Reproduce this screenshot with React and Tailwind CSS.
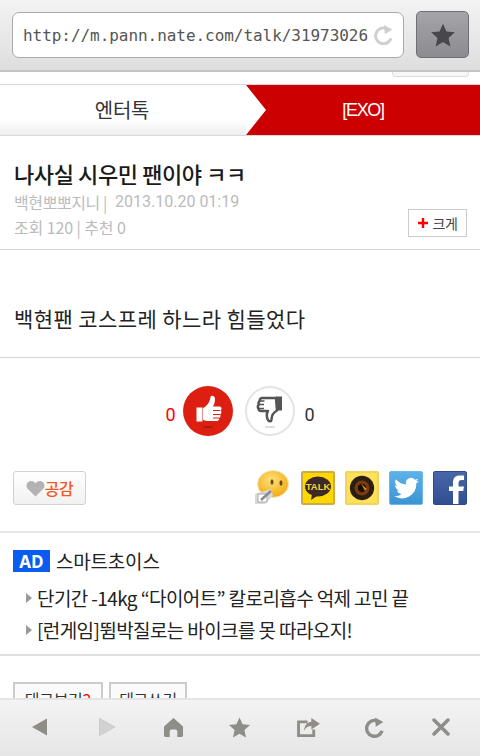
const KR = { fontFamily: '"Noto Sans CJK KR", "Noto Sans", sans-serif' };

function Star({ className }) {
  return (
    <svg viewBox="0 0 24 24" className={className} fill="currentColor">
      <path d="M12 1.500l3.200 7.200 7.800.8-5.900 5.200 1.700 7.800L12 18.400l-6.800 4.100 1.700-7.800L1 9.500l7.800-.8z" />
    </svg>
  );
}

function Refresh({ className, stroke = 4 }) {
  return (
    <svg viewBox="0 0 24 24" className={className} fill="none">
      <path d="M20.500 16a9.500 9.500 0 1 1-6-12" stroke="currentColor" strokeWidth={stroke} />
      <path d="M12 0l10 5.500-9 5.500z" fill="currentColor" />
    </svg>
  );
}

function ThumbUp() {
  return (
    <svg viewBox="0 0 50 50" className="w-[50px] h-[50px] shrink-0">
      <circle cx="25" cy="25" r="25" fill="#dd1f12" />
      <path d="M13.500 21.500h6v14h-6z" fill="#fff" />
      <path d="M20 22c4-2 7-6 7.500-11 .2-2 4.500-1.500 4.500 2 0 3-1 5.500-2 7.500h6.500c2.500 0 2.500 3.500 1 4 1.500 1 1 3.500-.5 4 1 1 .5 3-1 3.500.5 1.500-.5 3-2 3H24c-2 0-3-1-4-1.500z" fill="#fff" />
      <path d="M30 24.500h7M30 28.500h7M30 32h6" stroke="#dd1f12" strokeWidth="1" />
      <rect x="20" y="40" width="10" height="2" rx="1" fill="#a81c12" />
    </svg>
  );
}

function ThumbDown() {
  return (
    <svg viewBox="0 0 50 50" className="w-[50px] h-[50px] shrink-0">
      <circle cx="25" cy="25" r="24" fill="#fff" stroke="#e4e4e4" strokeWidth="2" />
      <path d="M37 10.500h-6v14h6z" fill="#555" />
      <path d="M31 12H17c-2 0-2.500 2-2 3-1.500 .5-2 2.500-1 3.500-1.500 1-1.500 3-.5 4 0 2 1.500 2.500 3 2.500h6.500c-1.500 2.500-1.500 6 0 9 1 2 3.500 1.500 3.500-.5 0-4 2-7 5.500-9z" fill="#fff" stroke="#555" strokeWidth="2.500" strokeLinejoin="round" />
      <path d="M14 18.500h5M14 22.500h5M15.500 15h4" stroke="#555" strokeWidth="1.500" />
      <rect x="20" y="40" width="10" height="2" rx="1" fill="#dddddd" />
    </svg>
  );
}

function Emoticon() {
  return (
    <svg viewBox="0 0 36 36" className="w-[36px] h-[36px]">
      <defs>
        <radialGradient id="face" cx="0.45" cy="0.35" r="0.7">
          <stop offset="0" stopColor="#ffe27a" />
          <stop offset="1" stopColor="#f2a50c" />
        </radialGradient>
      </defs>
      <ellipse cx="18" cy="14" rx="15.500" ry="13.500" fill="url(#face)" stroke="#fbe6b0" />
      <ellipse cx="17" cy="12" rx="1.500" ry="2.800" fill="#6b4a10" />
      <ellipse cx="26" cy="13" rx="1.500" ry="2.800" fill="#6b4a10" />
      <path d="M0 24l16-5 2 7-8 8H0z" fill="#d9d9d9" />
      <rect x="3" y="24" width="9" height="8" fill="#fff" stroke="#aaa" />
      <path d="M6 30l10-9" stroke="#8a8a8a" strokeWidth="2.500" />
    </svg>
  );
}

function KakaoTalk() {
  return (
    <div className="w-[34px] h-[34px] rounded-[2px] border-2 border-[#cdaa45] bg-[#fdd800] flex items-center justify-center">
      <svg viewBox="0 0 30 30" className="w-[30px] h-[30px]">
        <ellipse cx="15" cy="13.500" rx="13" ry="10" fill="#3d2a26" />
        <path d="M9 21l-1 6 6-4z" fill="#3d2a26" />
        <text x="15" y="17" textAnchor="middle" fontSize="9.500" fontWeight="700" fill="#f7d13c" fontFamily="Liberation Sans, sans-serif">TALK</text>
      </svg>
    </div>
  );
}

function KakaoStory() {
  return (
    <div className="w-[34px] h-[34px] rounded-[2px] border-2 border-[#f0d25c] bg-[#fde15a] flex items-center justify-center">
      <svg viewBox="0 0 30 30" className="w-[28px] h-[28px]">
        <circle cx="15" cy="15" r="13" fill="#2d1d12" />
        <circle cx="15" cy="15" r="8" fill="#7a3d0c" />
        <circle cx="15" cy="15" r="4.500" fill="#1a0f08" />
        <path d="M14 10l6 6-2 2z" fill="#d98a1f" />
      </svg>
    </div>
  );
}

function Twitter() {
  return (
    <div className="w-[34px] h-[34px] rounded-[2px] border border-[#6cb8e6] bg-gradient-to-b from-[#5cb2e8] to-[#3b94d4] flex items-center justify-center">
      <svg viewBox="0 0 24 24" className="w-[27px] h-[27px]" fill="#fff">
        <path d="M23 5c-.8.4-1.700.6-2.600.7.900-.6 1.600-1.400 2-2.500-.9.500-1.800.9-2.900 1.100a4.500 4.500 0 0 0-7.800 4.100C8 8.200 4.700 6.400 2.500 3.700c-1.200 2-.6 4.700 1.400 6-.7 0-1.400-.2-2-.6 0 2.200 1.500 4.100 3.600 4.500-.7.200-1.400.2-2 .1.600 1.800 2.200 3.100 4.200 3.100A9 9 0 0 1 1 18.700 12.800 12.800 0 0 0 20.700 7.300c.9-.6 1.700-1.400 2.300-2.300z" />
      </svg>
    </div>
  );
}

function Facebook() {
  return (
    <div className="w-[34px] h-[34px] rounded-[2px] border border-[#2d4a8c] bg-gradient-to-b from-[#4767a8] to-[#2f4f92] overflow-hidden flex items-end justify-end">
      <svg viewBox="0 0 24 30" className="w-[24px] h-[30px]" fill="#fff">
        <path d="M11 30V17H7v-4.500h4V8.500C11 4 13.500 1.500 17.500 1.500H22V6h-2.500C17.500 6 16.500 7 16.500 9v3.500H22l-.8 4.500h-4.700v13z" />
      </svg>
    </div>
  );
}

function Row({ children }) {
  return (
    <div className="flex items-center h-[32px] text-[19px] tracking-[-0.6px] text-[#222]">
      <span className="w-0 h-0 ml-[26px] mr-[5px] border-y-[5px] border-y-transparent border-l-[6px] border-l-[#999]" />
      <span>{children}</span>
    </div>
  );
}

export default function App() {
  return (
    <div className="w-[480px] h-[756px] flex flex-col overflow-hidden bg-white" style={KR}>
      {/* browser top bar */}
      <div className="h-[72px] shrink-0 flex items-center gap-[12px] pl-[12px] pr-[11px] pb-[1px] bg-gradient-to-b from-[#f3f3f3] to-[#dedede] border-b-2 border-[#c4c4c4]">
        <div className="w-[392px] h-[46px] flex items-center justify-between pl-[10px] pr-[9px] bg-white rounded-[7px] border border-[#aaa]">
          <span className="text-[16px] leading-none pt-[3px] text-[#555] whitespace-nowrap tracking-[-0.05px]" style={{ fontFamily: '"DejaVu Sans Mono", monospace' }}>
            http://m.pann.nate.com/talk/31973026
          </span>
          <Refresh className="w-[20px] h-[20px] text-[#cfcfcf] shrink-0" stroke={3.5} />
        </div>
        <div className="w-[53px] h-[47px] flex items-center justify-center rounded-[5px] border border-[#6f6f75] bg-gradient-to-b from-[#a5a5a9] to-[#8b8b90]">
          <Star className="w-[26px] h-[26px] text-[#47474c]" />
        </div>
      </div>

      <div className="flex-1 min-h-0 overflow-hidden">
        <div className="h-[5px] flex justify-end pr-[11px]">
          <div className="w-[77px] h-[5px] bg-[#f7f7f7] border border-t-0 border-[#dcdcdc] rounded-b-[4px]" />
        </div>

        {/* category tabs */}
        <div className="mt-[7px] h-[52px] flex border-y border-[#d8d8d8]">
          <div className="w-[246px] flex items-center justify-center pr-[2px] text-[20px] tracking-[-0.2px] text-[#333] bg-gradient-to-b from-white from-70% to-[#eeeeee]">
            엔터톡
          </div>
          <div className="flex-1 relative flex items-center justify-center bg-[#cc0000] text-white text-[18px] tracking-[-1.3px]" style={{ fontFamily: '"Liberation Sans", sans-serif' }}>
            <svg viewBox="0 0 20 50" preserveAspectRatio="none" className="absolute left-0 top-0 h-full w-[20px]">
              <path d="M0 0L20 25 0 50z" fill="#fff" />
            </svg>
            [EXO]
          </div>
        </div>

        {/* post header */}
        <div className="h-[114px] px-[14px] pt-[22px] border-b border-[#d4d4d4] relative">
          <div className="text-[22px] leading-[30px] font-medium tracking-[-0.4px] text-[#1a1a1a]">나사실 시우민 팬이야 ㅋㅋ</div>
          <div className="mt-[2px] text-[16px] leading-[24px] tracking-[-0.4px] text-[#bbb] flex">
            <span>백현뽀뽀지니 |</span>
            <span className="ml-[8px] tracking-normal" style={{ fontFamily: '"Roboto", sans-serif' }}>2013.10.20 01:19</span>
          </div>
          <div className="text-[16px] leading-[26px] tracking-[-0.1px] text-[#bbb]">조회 120 | 추천 0</div>
          <div className="absolute right-[13px] top-[73px] w-[59px] h-[28px] flex items-center justify-center gap-[5px] border border-[#ccc] bg-white text-[14px] text-[#444] tracking-[-0.5px]">
            <svg viewBox="0 0 10 10" className="w-[10px] h-[10px]">
              <path d="M3.800 0h2.400v3.800H10v2.400H6.200V10H3.800V6.200H0V3.800h3.800z" fill="#f00" />
            </svg>
            <span>크게</span>
          </div>
        </div>

        {/* body */}
        <div className="h-[108px] px-[14px] pt-[53px] border-b border-[#d4d4d4] text-[21px] leading-[30px] tracking-[0.4px] text-[#222]">
          백현팬 코스프레 하느라 힘들었다
        </div>

        {/* votes */}
        <div className="h-[175px] border-b-2 border-[#e6e6e6] pl-[13px] pr-[13px]">
          <div className="h-[112px] flex items-center justify-center pb-[6px] text-[18px]" style={{ fontFamily: '"Roboto", sans-serif' }}>
            <span className="text-[#f00] mr-[7px] mt-[6px]">0</span>
            <ThumbUp />
            <span className="w-[12px]" />
            <ThumbDown />
            <span className="text-[#333] ml-[10px] mt-[6px]">0</span>
          </div>
          <div className="flex items-center justify-between">
            <div className="w-[73px] h-[34px] flex items-center justify-center rounded-[3px] border border-[#d2d2d2] bg-gradient-to-b from-white to-[#f1f1f1] text-[#f5581e] text-[16px] font-medium tracking-[-0.5px]">
              <svg viewBox="0 0 20 18" className="w-[19px] h-[17px]">
                <path d="M10 17.500L1.500 9C-1 5.500 1.500 1 5.500 1 7.500 1 9 2 10 3.500 11 2 12.500 1 14.500 1c4 0 6.500 4.500 4 8z" fill="#b3b3b3" />
              </svg>
              공감
            </div>
            <div className="flex items-center gap-[10px]">
              <Emoticon />
              <KakaoTalk />
              <KakaoStory />
              <Twitter />
              <Facebook />
            </div>
          </div>
        </div>

        {/* ad */}
        <div className="h-[123px] border-b-2 border-[#e0e0e0] pt-[16px]">
          <div className="flex items-center gap-[6px] px-[13px] h-[24px]">
            <span className="w-[37px] h-[22px] bg-[#0a5cf0] text-white font-bold text-[17px] leading-none flex items-center justify-center" style={{ fontFamily: '"Open Sans", sans-serif' }}>AD</span>
            <span className="text-[19px] tracking-[-0.2px] text-[#222]">스마트초이스</span>
          </div>
          <div className="mt-[9px]">
            <Row>단기간 -14kg “다이어트” 칼로리흡수 억제 고민 끝</Row>
            <Row>[런게임]뜀박질로는 바이크를 못 따라오지!</Row>
          </div>
        </div>

        {/* tag buttons, cut off by the toolbar */}
        <div className="mt-[26px] flex gap-[6px] px-[13px]">
          <div className="w-[90px] h-[32px] pt-[2px] border-2 border-[#ccc] bg-[#fafafa] flex items-center justify-center text-[16px] text-[#333] tracking-[-0.3px]">
            태그보기<span className="text-[#f00]">2</span>
          </div>
          <div className="w-[78px] h-[32px] pt-[2px] border-2 border-[#ccc] bg-[#fafafa] flex items-center justify-center text-[16px] text-[#333] tracking-[-0.3px]">
            태그쓰기
          </div>
        </div>
      </div>

      {/* browser bottom bar */}
      <div className="h-[58px] shrink-0 border-t-2 border-[#e4e4e4] bg-gradient-to-b from-[#f3f3f3] to-[#e6e6e6] relative z-10 flex items-center pl-[32px] pb-[2px] text-[#8e8d88]">
        <svg viewBox="0 0 16 18" className="w-[15px] h-[18px]"><path d="M16 0v18L0 9z" fill="currentColor" /></svg>
        <svg viewBox="0 0 16 18" className="w-[16px] h-[18px] ml-[52px]"><path d="M0 0v18l16-9z" fill="#d2d2d2" stroke="#bdbdbd" strokeWidth="0.5" /></svg>
        <svg viewBox="0 0 20 20" className="w-[19px] h-[19px] ml-[49px]"><path d="M10 0L20 9v9.500c0 .8-.6 1.500-1.500 1.500H14v-6c0-1-1-2-2-2H8c-1 0-2 1-2 2v6H1.500C.6 20 0 19.300 0 18.500V9z" fill="currentColor" /></svg>
        <Star className="w-[23px] h-[23px] ml-[45px]" />
        <svg viewBox="0 0 24 20" className="w-[23px] h-[19px] ml-[46px]" fill="none">
          <path d="M11 4H1.500v14.500h16V12" stroke="currentColor" strokeWidth="3" />
          <path d="M15 0l9 6-9 6V8.500c-4 0-6 2-7.500 5 0-5 2.500-9 7.500-9.500z" fill="currentColor" />
        </svg>
        <Refresh className="w-[20px] h-[21px] ml-[45px]" />
        <svg viewBox="0 0 18 18" className="w-[18px] h-[18px] ml-[47px]"><path d="M2 2l14 14M16 2L2 16" stroke="currentColor" strokeWidth="3.500" strokeLinecap="round" /></svg>
      </div>
    </div>
  );
}
